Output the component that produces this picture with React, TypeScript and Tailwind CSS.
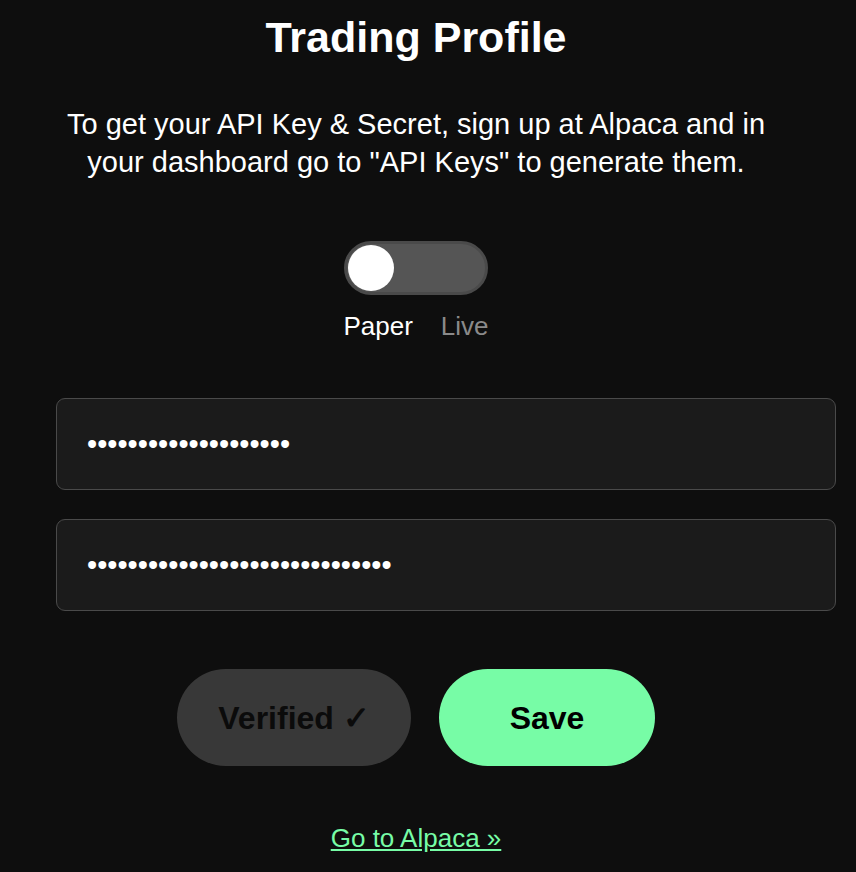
export default function App() {
  return (
    <div
      className="min-h-screen bg-[#0e0e0e] text-white overflow-hidden"
      style={{ fontFamily: '"Liberation Sans", Arial, sans-serif' }}
    >
      <div className="w-[720px] ml-[56px] flex flex-col items-center">
        <h1 className="mt-[13px] text-[43px] leading-[48px] font-bold">Trading Profile</h1>

        <p className="mt-[44px] text-[29px] leading-[38px] text-center whitespace-nowrap">
          To get your API Key &amp; Secret, sign up at Alpaca and in
          <br />
          your dashboard go to "API Keys" to generate them.
        </p>

        {/* Paper / Live toggle */}
        <div className="mt-[60px] flex flex-col items-center">
          <div className="w-[144px] h-[54px] rounded-full bg-[#555555] border-[3px] border-[#4a4a4a] flex items-center pl-[1px]">
            <div className="w-[46px] h-[46px] rounded-full bg-white" />
          </div>
          <div className="mt-[16px] flex gap-[28px] text-[26px] leading-[30px]">
            <span className="text-white">Paper</span>
            <span className="text-[#8a8a8a]">Live</span>
          </div>
        </div>

        {/* Keys */}
        <div className="mt-[57px] self-start flex flex-col gap-[29px]">
          <input
            type="password"
            readOnly
            value="xxxxxxxxxxxxxxxxxxxx"
            className="w-[780px] h-[92px] px-[30px] rounded-[9px] bg-[#1b1b1b] border border-[#4a4a4a] text-white text-[29px] outline-none"
          />
          <input
            type="password"
            readOnly
            value="xxxxxxxxxxxxxxxxxxxxxxxxxxxxxx"
            className="w-[780px] h-[92px] px-[30px] rounded-[9px] bg-[#1b1b1b] border border-[#4a4a4a] text-white text-[29px] outline-none"
          />
        </div>

        {/* Actions */}
        <div className="mt-[58px] flex gap-[28px]">
          <button className="w-[234px] h-[97px] rounded-full bg-[#383838] text-[#0b0b0b] text-[32px] font-bold">
            Verified ✓
          </button>
          <button className="w-[216px] h-[97px] rounded-full bg-[#77fca6] text-black text-[32px] font-bold">
            Save
          </button>
        </div>

        <a href="#" className="mt-[57px] text-[26px] leading-[30px] text-[#77fca6] underline">
          Go to Alpaca »
        </a>
      </div>
    </div>
  );
}
